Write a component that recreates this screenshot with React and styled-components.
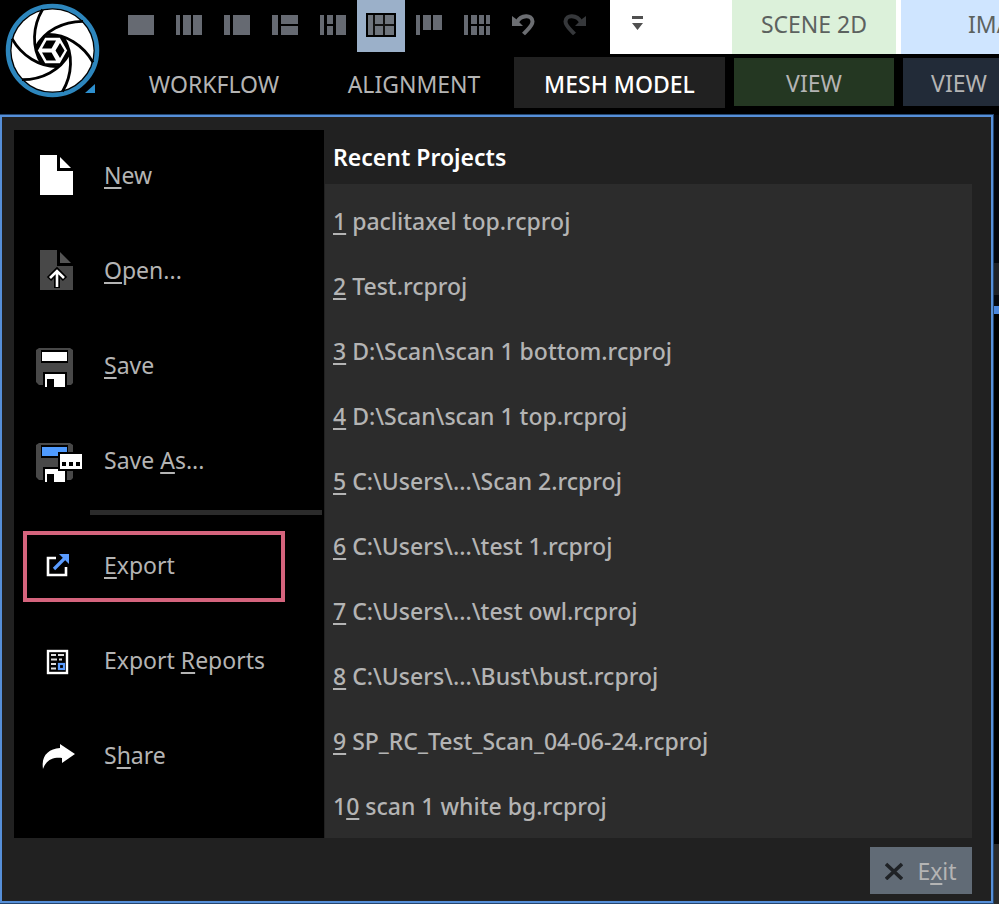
import React from 'react'
import styled, { createGlobalStyle } from 'styled-components'

const layouts = [
  { name: 'Single view', rects: [[0, 0, 26, 20]] },
  { name: 'Three columns', rects: [[0, 0, 4, 20], [7, 0, 8, 20], [17, 0, 9, 20]] },
  { name: 'Side and main', rects: [[0, 0, 6, 20], [9, 0, 17, 20]] },
  { name: 'Side and two rows', rects: [[0, 0, 6, 20], [9, 0, 17, 9], [9, 11, 17, 9]] },
  { name: 'Side, split and main', rects: [[0, 0, 4, 20], [7, 0, 6, 9], [7, 11, 6, 9], [16, 0, 10, 20]] },
  { name: 'Side and grid', active: true, rects: [[0, 0, 5, 20], [7, 0, 8, 9], [7, 11, 8, 9], [17, 0, 9, 9], [17, 11, 9, 9]] },
  { name: 'Top columns', rects: [[0, 0, 4, 20], [7, 0, 8, 15], [17, 0, 9, 15]] },
  { name: 'Side and six views', rects: [[0, 0, 4, 20], [7, 0, 6, 9], [7, 11, 6, 9], [15, 0, 5, 9], [15, 11, 5, 9], [22, 0, 4, 9], [22, 11, 4, 9]] },
]

const projects = [
  ['', '1', ' paclitaxel top.rcproj'],
  ['', '2', ' Test.rcproj'],
  ['', '3', ' D:\\Scan\\scan 1 bottom.rcproj'],
  ['', '4', ' D:\\Scan\\scan 1 top.rcproj'],
  ['', '5', ' C:\\Users\\...\\Scan 2.rcproj'],
  ['', '6', ' C:\\Users\\...\\test 1.rcproj'],
  ['', '7', ' C:\\Users\\...\\test owl.rcproj'],
  ['', '8', ' C:\\Users\\...\\Bust\\bust.rcproj'],
  ['', '9', ' SP_RC_Test_Scan_04-06-24.rcproj'],
  ['1', '0', ' scan 1 white bg.rcproj'],
]

function Logo() {
  return (
    <svg width="114" height="112" viewBox="0 0 114 112" aria-hidden="true">
      <g transform="translate(52.5 50.5)">
        <circle r="44.500" fill="#000" stroke="#2d86bd" strokeWidth="4.500" />
        <circle r="41" fill="#fff" />
        <g fill="none" stroke="#000" strokeWidth="2.8">
          {[0, 60, 120, 180, 240, 300].map(a => (
            <path key={a} d="M-10 -41C-20 -24 -21 -3 -11 13" transform={`rotate(${a})`} />
          ))}
        </g>
        <path d="M-16 0L-8 -14H8L16 0L8 14H-8Z" fill="#fff" stroke="#000" strokeWidth="2.5" />
        <g fill="#000">
          <path d="M-10.500 -2L-6 -10H3.500L-1 -2Z" />
          <path d="M-10.500 2L-6 10H3.500L-1 2Z" />
          <path d="M3 0L7.500 -7.500L12 0L7.500 7.500Z" />
        </g>
      </g>
      <path d="M95 84V93H85Z" fill="#2d8fce" />
    </svg>
  )
}

function LayoutIcon({ rects, active }) {
  return (
    <svg width="30" height="24" viewBox="-2 -2 30 24" aria-hidden="true">
      {active && <rect x="-1" y="-1" width="28" height="22" fill="#111" stroke="#000" strokeWidth="2" />}
      {rects.map(([x, y, w, h]) => (
        <rect key={`${x}-${y}`} x={x} y={y} width={w} height={h} fill={active ? '#6f757d' : '#666a72'} />
      ))}
    </svg>
  )
}

function UndoIcon({ flip }) {
  return (
    <svg width="26" height="22" viewBox="0 0 26 22" aria-hidden="true">
      <g transform={flip ? 'translate(26 0) scale(-1 1)' : undefined}>
        <path d="M0 2L4 5L11 12H0Z" fill="currentColor" />
        <path d="M5 8C9 1 20 0 20.500 7.500C20.500 12 16 15 11.500 20" fill="none" stroke="currentColor" strokeWidth="4" />
      </g>
    </svg>
  )
}

function FileIcon({ open }) {
  return (
    <MenuSvg>
      <path d="M4 1H21V17H37V41H4Z" fill={open ? '#484848' : '#fff'} />
      <path d="M24 3V14H35Z" fill={open ? '#555' : '#fff'} />
      {open && (
        <g fill="none">
          <path d="M21 39V23M13 30L21 22L29 30" stroke="#000" strokeWidth="6" />
          <path d="M21 38V23M14 29L21 22L28 29" stroke="#fff" strokeWidth="2.600" />
        </g>
      )}
    </MenuSvg>
  )
}

function SaveIcon({ as }) {
  return (
    <MenuSvg>
      <g transform="translate(0 2)">
        <path d="M3 2H34L37 4V37L35 39H31V26H7V39H3L0 36V4Z" fill="#484848" />
        <path d="M5 4H32V17H5Z" fill="#000" />
        <path d="M6 6H31V15H6Z" fill={as ? '#4f9bff' : '#fff'} />
        <path d="M7 26H30V41H7Z" fill="#000" />
        <path d="M9 28H29V41H18V33H11V41H9Z" fill="#fff" />
        {as && (
          <g>
            <path d="M22 11H47V30H22Z" fill="#000" />
            <path d="M24 13H46V28H24Z" fill="#fff" />
            <path d="M26 21H30V25H26ZM33 21H37V25H33ZM40 21H44V25H40Z" fill="#000" />
          </g>
        )}
      </g>
    </MenuSvg>
  )
}

function ExportIcon() {
  return (
    <MenuSvg>
      <path d="M20 14H12V31H30V23" fill="none" stroke="#fff" strokeWidth="2.600" />
      <path d="M18 25L29 14" stroke="#5a9cff" strokeWidth="3.200" />
      <path d="M23 10H33V20Z" fill="#5a9cff" />
    </MenuSvg>
  )
}

function ReportIcon() {
  return (
    <MenuSvg>
      <g transform="translate(0 2)">
        <rect x="12" y="10" width="19" height="22" fill="none" stroke="#fff" strokeWidth="2.400" />
        <path d="M15 14H20M22 14H28M15 18.500H21M23 18.500H26M15 23H20M15 27.500H20" stroke="#ddd" strokeWidth="2" />
        <rect x="23" y="23" width="5" height="5" fill="none" stroke="#5a9cff" strokeWidth="2.200" />
      </g>
    </MenuSvg>
  )
}

function ShareIcon() {
  return (
    <MenuSvg>
      <path d="M7 35C5 22 12 15 24 14V10L39 20L26 29V24C17 23 10 26 7 35Z" fill="#fff" />
    </MenuSvg>
  )
}

const fileItems = [
  { label: ['', 'N', 'ew'], icon: <FileIcon /> },
  { label: ['', 'O', 'pen...'], icon: <FileIcon open /> },
  { label: ['', 'S', 'ave'], icon: <SaveIcon /> },
  { label: ['Save ', 'A', 's...'], icon: <SaveIcon as /> },
]

const shareItems = [
  { label: ['', 'E', 'xport'], icon: <ExportIcon />, marked: true },
  { label: ['Export ', 'R', 'eports'], icon: <ReportIcon /> },
  { label: ['S', 'h', 'are'], icon: <ShareIcon /> },
]

function Label({ parts }) {
  const [before, key, after] = parts
  return (
    <span>{before}<Key>{key}</Key>{after}</span>
  )
}

function MenuItem({ item }) {
  return (
    <MenuButton type="button" $marked={item.marked}>
      {item.icon}
      <Label parts={item.label} />
    </MenuButton>
  )
}

function App() {
  return (
    <Page>
      <GlobalStyle />
      <Header>
        <LogoButton type="button" aria-label="Application menu"><Logo /></LogoButton>
        <HeaderRows>
          <TitleRow>
            <QuickAccess>
              {layouts.map(l => (
                <ToolButton key={l.name} type="button" aria-label={l.name} $active={l.active}>
                  <LayoutIcon rects={l.rects} active={l.active} />
                </ToolButton>
              ))}
              <ToolButton type="button" aria-label="Undo"><UndoIcon /></ToolButton>
              <ToolButton type="button" aria-label="Redo" $dim><UndoIcon flip /></ToolButton>
            </QuickAccess>
            <TitleBar>
              <MoreButton type="button" aria-label="Customize toolbar">
                <svg width="12" height="16" viewBox="0 0 12 16" aria-hidden="true">
                  <path d="M0 1H11V4H0ZM0 8H11L5.500 15Z" fill="#505050" />
                </svg>
              </MoreButton>
              <Context $bg="#dcf1da">SCENE 2D</Context>
              <Context $bg="#cfe5ff" $last>IMAGE 2D</Context>
            </TitleBar>
          </TitleRow>
          <Tabs>
            <Tab type="button" $width={200}>WORKFLOW</Tab>
            <Tab type="button" $width={200}>ALIGNMENT</Tab>
            <Tab type="button" $width={211} $bg="#212121" $active>MESH MODEL</Tab>
            <ViewTab type="button" $width={160} $bg="#243722">VIEW</ViewTab>
            <ViewTab type="button" $width={112} $bg="#222b38">VIEW</ViewTab>
          </Tabs>
        </HeaderRows>
      </Header>
      <Body>
        <Panel>
          <Columns>
            <Menu>
              {fileItems.map(item => <MenuItem key={item.label.join('')} item={item} />)}
              <Divider />
              {shareItems.map(item => <MenuItem key={item.label.join('')} item={item} />)}
            </Menu>
            <Recent>
              <RecentTitle>Recent Projects</RecentTitle>
              <ProjectList>
                {projects.map(p => (
                  <li key={p.join('')}>
                    <Project href="#"><Label parts={p} /></Project>
                  </li>
                ))}
              </ProjectList>
            </Recent>
          </Columns>
          <Footer>
            <ExitButton type="button">
              <svg width="18" height="18" viewBox="0 0 18 18" aria-hidden="true">
                <path d="M1 2L17 17M17 2L1 17" stroke="#1f2226" strokeWidth="3.600" />
              </svg>
              <Label parts={['E', 'x', 'it']} />
            </ExitButton>
          </Footer>
        </Panel>
        <Behind>
          <BehindBlock $height={148} $bg="#05070c" />
          <BehindBlock $height={32} $bg="#202226" />
          <BehindBlock $height={11} $bg="#05070c" />
          <BehindBlock $height={8} $bg="#4a86dc" />
          <BehindBlock $height={530} $bg="#000" />
          <BehindBlock $grow $bg="#2a2a2a" />
        </Behind>
      </Body>
    </Page>
  )
}

const GlobalStyle = createGlobalStyle`
  * {
    box-sizing: border-box;
  }
  body {
    margin: 0;
    background: #000;
  }
  button {
    border: 0;
    padding: 0;
    background: none;
    color: inherit;
    font: inherit;
  }
`

const Page = styled.div`
  min-height: 100vh;
  display: flex;
  flex-direction: column;
  overflow: hidden;
  background: #000;
  color: #b4b4b4;
  font-family: 'Noto Sans', 'Open Sans', sans-serif;
  font-size: 23px;
  line-height: 32px;
  white-space: nowrap;
`

const Header = styled.header`
  display: flex;
  height: 115px;
`

const LogoButton = styled.button`
  flex: none;
  width: 114px;
  display: flex;
`

const HeaderRows = styled.div`
  flex: 1;
  min-width: 0;
`

const TitleRow = styled.div`
  display: flex;
  height: 54px;
`

const QuickAccess = styled.div`
  display: flex;
  flex: none;
  padding: 0 13px 2px 3px;
`

const ToolButton = styled.button`
  width: 48px;
  display: flex;
  align-items: center;
  justify-content: center;
  padding-bottom: 2px;
  background: ${p => (p.$active ? '#9bb0c9' : 'transparent')};
  color: ${p => (p.$dim ? '#36383b' : '#6c6e72')};
`

const TitleBar = styled.div`
  flex: 1;
  min-width: 0;
  display: flex;
  gap: 5px;
  background: #fff;
  color: #5c625f;
`

const MoreButton = styled.button`
  flex: none;
  width: 117px;
  padding: 0 0 10px 22px;
  text-align: left;
`

const Context = styled.div`
  flex: ${p => (p.$last ? '1 0 auto' : 'none')};
  width: ${p => (p.$last ? 'auto' : '164px')};
  padding: 8px 0 0 ${p => (p.$last ? '67px' : '0')};
  text-align: ${p => (p.$last ? 'left' : 'center')};
  background: ${p => p.$bg};
`

const Tabs = styled.nav`
  display: flex;
  align-items: flex-start;
  padding-top: 3px;
`

const Tab = styled.button`
  flex: none;
  width: ${p => p.$width}px;
  height: 51px;
  padding-top: 2px;
  text-align: center;
  background: ${p => p.$bg || 'transparent'};
  color: ${p => (p.$active ? '#fff' : '#b4b4b4')};
  font-weight: ${p => (p.$active ? 500 : 400)};
`

const ViewTab = styled(Tab)`
  height: 48px;
  margin: 1px 0 0 9px;
`

const Body = styled.main`
  flex: 1;
  display: flex;
`

const Panel = styled.div`
  flex: 1;
  min-width: 0;
  padding: 13px 19px 7px 12px;
  margin-bottom: 1px;
  border: 2px solid #568fd8;
  box-shadow: 0 0 0 1px #24466f;
  background: #212121;
  position: relative;
`

const Columns = styled.div`
  display: flex;
`

const Menu = styled.nav`
  flex: none;
  width: 310px;
  display: flex;
  flex-direction: column;
  gap: 5px;
  background: #000;
`

const MenuButton = styled.button`
  position: relative;
  height: 90px;
  display: flex;
  align-items: center;
  gap: 22px;
  padding-left: 22px;
  text-align: left;

  &::after {
    content: '';
    display: ${p => (p.$marked ? 'block' : 'none')};
    position: absolute;
    inset: 11px 39px 8px 9px;
    border: 4px solid #d5647d;
  }
`

const MenuSvg = styled.svg.attrs({ viewBox: '0 0 46 42', 'aria-hidden': true })`
  flex: none;
  width: 46px;
  height: 42px;
  overflow: visible;
`

const Divider = styled.hr`
  width: 232px;
  height: 5px;
  margin: 0 2px 0 auto;
  border: 0;
  background: #2b2b2b;
`

const Key = styled.span`
  text-decoration: underline;
  text-decoration-thickness: 2px;
  text-underline-offset: 3px;
  text-decoration-skip-ink: none;
`

const Recent = styled.section`
  flex: 1;
  min-width: 0;
  padding-left: 1px;
`

const RecentTitle = styled.h2`
  height: 54px;
  margin: 0;
  padding: 11px 8px 0;
  color: #fff;
  font-size: 23px;
  font-weight: 600;
`

const ProjectList = styled.ul`
  margin: 0;
  padding: 4px 8px 0;
  list-style: none;
  background: #2c2c2c;
`

const Project = styled.a`
  display: flex;
  align-items: center;
  height: 65px;
  color: inherit;
  font-weight: 500;
  text-decoration: none;
`

const Footer = styled.footer`
  display: flex;
  justify-content: flex-end;
  padding-top: 9px;
`

const ExitButton = styled.button`
  width: 102px;
  height: 47px;
  display: flex;
  align-items: center;
  justify-content: center;
  gap: 14px;
  background: #616b76;
`

const Behind = styled.div`
  flex: none;
  width: 6px;
  display: flex;
  flex-direction: column;
`

const BehindBlock = styled.div`
  flex: ${p => (p.$grow ? 1 : 'none')};
  height: ${p => (p.$grow ? 'auto' : `${p.$height}px`)};
  background: ${p => p.$bg};
`

export default App
